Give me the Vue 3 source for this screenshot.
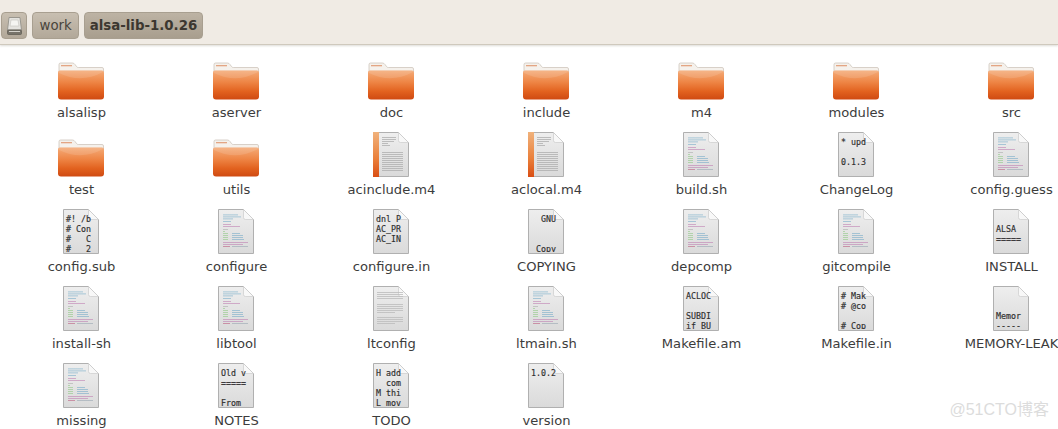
<script setup>
const rows = [
  [["alsalisp", "folder"], ["aserver", "folder"], ["doc", "folder"], ["include", "folder"], ["m4", "folder"], ["modules", "folder"], ["src", "folder"]],
  [["test", "folder"], ["utils", "folder"], ["acinclude.m4", "m4"], ["aclocal.m4", "m4"], ["build.sh", "script"], ["ChangeLog", "text", ["* upd", "", "0.1.3"]], ["config.guess", "script"]],
  [["config.sub", "text", ["#! /b", "# Con", "#   C", "#   2"]], ["configure", "script"], ["configure.in", "text", ["dnl P", "AC_PR", "AC_IN"]], ["COPYING", "text", ["  GNU", "", "", " Copy"]], ["depcomp", "script"], ["gitcompile", "script"], ["INSTALL", "text", ["", "ALSA", "====="]]],
  [["install-sh", "script"], ["libtool", "script"], ["ltconfig", "plain"], ["ltmain.sh", "script"], ["Makefile.am", "text", ["ACLOC", "", "SUBDI", "if BU"]], ["Makefile.in", "text", ["# Mak", "# @co", "", "# Cop"]], ["MEMORY-LEAK", "text", ["", "", "Memor", "-----"]]],
  [["missing", "script"], ["NOTES", "text", ["Old v", "=====", "", "From"]], ["TODO", "text", ["H add", "  com", "M thi", "L mov"]], ["version", "text", ["1.0.2"]]],
];

const items = rows.flat().map(([name, kind, lines]) => ({ name, kind, lines }));

// coloured source lines on the script thumbnails: [y, x, width, colour]
const scriptLines = [
  [5.5, 5, 15, "#5f9fc4"], [7.5, 5, 18, "#5f9fc4"], [9.5, 5, 10, "#5f9fc4"], [12, 5, 8, "#5f9fc4"],
  [15, 5, 8, "#b86aa8"], [17, 5, 17, "#b86aa8"], [20, 5, 5, "#a0a0a0"], [22, 5, 2, "#7cc46e"],
  [24, 5, 5, "#7cc46e"], [24, 14, 8, "#5f9fc4"], [26, 5, 5, "#7cc46e"], [26, 14, 11, "#5f9fc4"],
  [28, 5, 5, "#7cc46e"], [28, 14, 11, "#5f9fc4"], [30, 5, 5, "#7cc46e"], [30, 14, 12, "#5f9fc4"],
  [33, 5, 25, "#b86aa8"], [35, 5, 20, "#b86aa8"], [37, 5, 7, "#b5406a"], [37, 14, 16, "#8a9aa8"],
];

// grey text rows: [y, x, width]
const m4Lines = [[5, 9, 14], [7, 9, 14], [9, 9, 12], [11, 9, 6], [13, 9, 8]];
for (let y = 20; y <= 38; y += 2) m4Lines.push([y, 9, 21]);

const plainLines = [];
for (const [from, to] of [[6, 13], [18, 26], [31, 37]]) {
  for (let y = from; y <= to; y += 2) plainLines.push([y, 4, y === to ? 18 : 26]);
}
</script>

<template>
  <div class="window">
    <header class="pathbar">
      <button class="crumb home" aria-label="File system">
        <svg width="15" height="18" viewBox="0 0 15 18">
          <path d="M2 .5h11l1.500 12.500H.5z" fill="#e4e3df" stroke="#9a978f" />
          <path d="M4 3h7l1 6H3z" fill="#f5f5f2" stroke="#c4c3be" stroke-width=".6" />
          <rect x=".5" y="13" width="14" height="4.500" rx="1" fill="#77736a" stroke="#5c5950" stroke-width=".7" />
          <rect x="2" y="14" width="11" height="1" fill="#d5d3cc" />
        </svg>
      </button>
      <button class="crumb">work</button>
      <button class="crumb current">alsa-lib-1.0.26</button>
    </header>

    <main class="grid">
      <div v-for="item in items" :key="item.name" class="cell">
        <div class="thumb">
          <svg v-if="item.kind === 'folder'" width="46" height="38" viewBox="0 0 46 38">
            <defs>
              <linearGradient id="fold" x1="0" y1="0" x2="0" y2="1">
                <stop offset="0" stop-color="#f4ab78" />
                <stop offset=".4" stop-color="#ee8545" />
                <stop offset=".72" stop-color="#e2621f" />
                <stop offset="1" stop-color="#cf4a12" />
              </linearGradient>
            </defs>
            <path d="M1 10V2.500Q1 1 2.500 1h12q1.500 0 2.500 1.500l1.500 2q.5 1 2 1H44q1.500 0 1.500 1.500V12H1z" fill="#f5f1ec" stroke="#c9bfb5" stroke-width=".7" />
            <rect x="3" y="3" width="11" height="1.300" fill="#e3a583" />
            <path d="M0 10.500Q0 8.500 2 8.500h42q2 0 2 2v24q0 3-3 3H3q-3 0-3-3z" fill="url(#fold)" />
            <path d="M1 11q22 11 44-1v-1H1z" fill="#fff" opacity=".12" />
          </svg>
          <svg v-else width="36" height="45" viewBox="0 0 36 45">
            <defs>
              <linearGradient id="paper" x1="0" y1="0" x2="0" y2="1">
                <stop offset="0" stop-color="#eeeeee" />
                <stop offset="1" stop-color="#dadada" />
              </linearGradient>
              <linearGradient id="spine" x1="0" y1="0" x2="0" y2="1">
                <stop offset="0" stop-color="#f0b27c" />
                <stop offset=".6" stop-color="#ea7f3a" />
                <stop offset="1" stop-color="#d94e14" />
              </linearGradient>
              <clipPath id="page"><rect x="0" y="0" width="36" height="43" /></clipPath>
            </defs>
            <path d="M.5.5h25l10 10v34H.5z" fill="url(#paper)" stroke="#b0b0b0" />
            <path d="M25.500.5v8q0 2 2 2h8z" fill="#f8f8f8" stroke="#cccccc" stroke-width=".7" />
            <g v-if="item.kind === 'script'" opacity=".6">
              <rect v-for="(l, i) in scriptLines" :key="i" :x="l[1]" :y="l[0]" :width="l[2]" height=".8" :fill="l[3]" />
            </g>
            <g v-else-if="item.kind === 'm4'">
              <rect x="0" y="0" width="6" height="45" fill="url(#spine)" />
              <rect v-for="l in m4Lines" :key="l[0]" :x="l[1]" :y="l[0]" :width="l[2]" height=".8" fill="#b0b0b0" />
            </g>
            <g v-else-if="item.kind === 'plain'">
              <rect v-for="l in plainLines" :key="l[0]" :x="l[1]" :y="l[0]" :width="l[2]" height=".8" fill="#bcbcbc" />
            </g>
            <text v-else class="code" clip-path="url(#page)">
              <tspan v-for="(l, i) in item.lines" :key="i" x="3" :y="12.500 + i * 10">{{ l }}</tspan>
            </text>
          </svg>
        </div>
        <span class="label">{{ item.name }}</span>
      </div>
    </main>

    <span class="watermark">@51CTO博客</span>
  </div>
</template>

<style scoped>
.window {
  position: relative;
  width: 1058px;
  height: 429px;
  overflow: hidden;
  background: #fff;
  font-family: "DejaVu Sans", sans-serif;
  color: #3c3c3c;
}

.pathbar {
  display: flex;
  align-items: flex-start;
  gap: 5px;
  height: 45px;
  padding: 12px 0 0 1px;
  box-sizing: border-box;
  background: #f0ebe4;
  border-bottom: 1px solid #cfc9bd;
  box-shadow: 0 1px 2px rgba(120, 110, 95, 0.25);
}

.crumb {
  display: flex;
  align-items: center;
  justify-content: center;
  height: 27px;
  padding: 0 6.500px;
  border: 1px solid #a89f90;
  border-radius: 4px;
  background: linear-gradient(#c8bfb1, #b2a899);
  font: 13.330px "DejaVu Sans", sans-serif;
  color: #4a453d;
}

.home {
  width: 26px;
  padding: 0;
}

.current {
  padding: 0 4.500px;
  font-weight: bold;
  color: #3c3730;
  background: linear-gradient(#bdb3a4, #a89e8e);
}

.grid {
  display: grid;
  grid-template-columns: repeat(7, 155px);
  grid-auto-rows: 77px;
  padding: 7px 0 0 4px;
}

.cell {
  display: flex;
  flex-direction: column;
  align-items: center;
}

.thumb {
  display: flex;
  align-items: flex-end;
  justify-content: center;
  height: 48px;
  margin-bottom: 5px;
  padding-right: 1px;
}

.label {
  font-size: 13.100px;
  line-height: 16px;
  white-space: nowrap;
}

.code {
  font-family: "DejaVu Sans Mono", monospace;
  font-size: 8.300px;
  fill: #2e2e2e;
  stroke: #2e2e2e;
  stroke-width: 0.15px;
  white-space: pre;
}

.watermark {
  position: absolute;
  right: 9px;
  bottom: 9px;
  font: 16px "Liberation Sans", "Noto Sans CJK SC", sans-serif;
  color: #dcdcdc;
}
</style>
